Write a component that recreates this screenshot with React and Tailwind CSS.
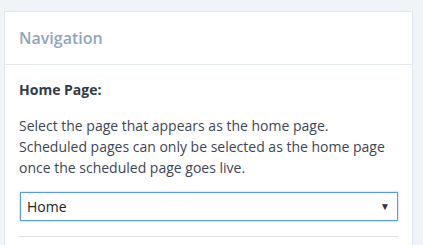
export default function App() {
  return (
    <div className="h-[245px] overflow-hidden bg-[#f0f3f7] pl-1 pr-[10px] pt-[11px] font-['Open_Sans',sans-serif]">
      <div className="h-[300px] border border-[#e2e7ed] bg-white">
        <div className="flex h-[53px] items-center border-b border-[#e2e7ed] px-[14px]">
          <h2 className="text-[16px] font-semibold text-[#8fa6bd]">Navigation</h2>
        </div>
        <div className="px-[14px] pt-[14px]">
          <div className="text-[14px] font-bold leading-[21px] text-[#333b46]">Home Page:</div>
          <p className="mt-[15px] text-[14px] leading-[21px] text-[#3c4654]">
            Select the page that appears as the home page.
            <br />
            Scheduled pages can only be selected as the home page
            <br />
            once the scheduled page goes live.
          </p>
          <div className="ml-px mt-[14px] flex h-[29px] items-center justify-between border border-[#5d9bd8] bg-white pl-[6px] pr-[7px] shadow-[0_0_2px_rgba(93,155,216,0.6)]">
            <span className="text-[14px] text-[#222]">Home</span>
            <span className="text-[10px] text-[#333]">▼</span>
          </div>
          <div className="mt-[15px] border-t border-[#dcdfe3]" />
        </div>
      </div>
    </div>
  );
}
